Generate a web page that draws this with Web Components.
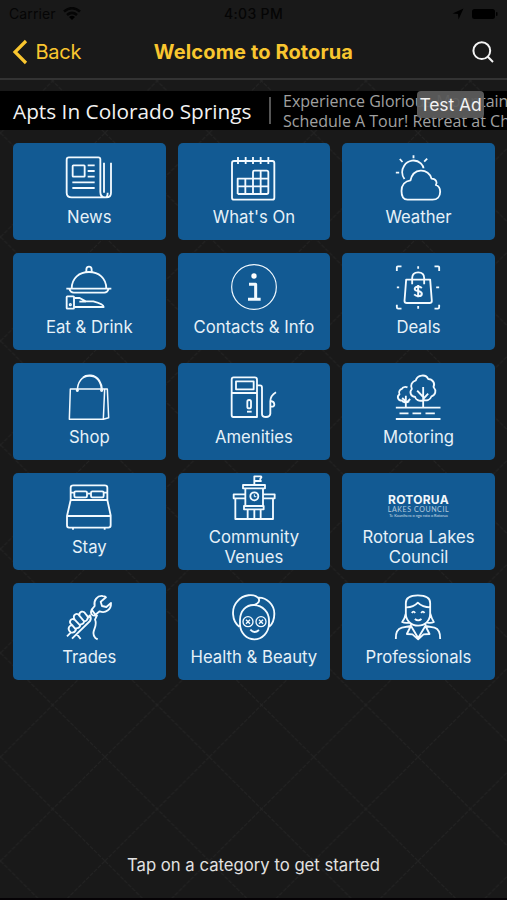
<!DOCTYPE html>
<html lang="en">
<head>
<meta charset="utf-8">
<title>Welcome to Rotorua</title>
<style>
html,body{margin:0;height:100%;background:#191919}
body{width:507px;height:900px;overflow:hidden;font-family:Inter,"Liberation Sans",sans-serif}
</style>
</head>
<body>
<rotorua-app></rotorua-app>
<script>
const icons = {
news:['196 55 144 144','<path d="M302 172V74Q302 68 296 68H208Q201 68 201 75V174Q201 188 216 188H320Q334 188 334 174V84M302 172Q302 188 317 188Q324 187 324 174M313 84V174"/><rect x="219" y="92" width="36" height="34" rx="2"/><path d="M264 92H285M264 109H285M264 126H285M218 143H285M218 160H285"/>'],
calendar:['690 55 144 144','<rect x="696" y="79" width="127" height="116" rx="6"/><path d="M714 67V88M737 67V88M759 67V88M782 67V88M805 67V88M713 178V132H759V112Q759 108 763 108H800Q805 108 805 113V173Q805 178 800 178H713M713 155H805M736 132V178M759 132V178M782 108V178M759 132H805"/>'],
weather:['424.5 55 144 144','<path d="M465 195C451 195 447 181 447 169C447 151 458 139 474 137C478 119 488 109 504 108C520 107 534 117 537 132C552 132 555 145 550 151C559 154 563 162 563 171C563 186 554 195 540 195ZM456 133C447 121 447 105 455 93C466 76 490 72 505 86C510 91 513 97 513 101M430 114H440M442 73L450 82M483 62V71M524 72L515 81"/>'],
dining:['196 55 144 144','<path d="M216 132C216 100 239 82 268 82S320 100 320 132M260 83V75Q260 66 268 66T276 75V83M200 132H335M209 133Q213 144 222 144H314Q323 144 327 133"/><rect x="201" y="155" width="22" height="37" rx="2"/><path d="M224 160H240L258 170H281Q312 178 312 187H224M239 171H259"/><circle cx="212" cy="180" r="2"/>'],
info:['690 55 144 144','<circle cx="762" cy="127" r="67" stroke-width="3.5"/><path d="M747 119H767V164M744 164H782" stroke-width="9"/><circle cx="762" cy="94" r="8" fill="#fff" stroke="none"/>'],
deals:['424.5 55 144 144','<path d="M461 105H533L538 169Q538 175 531 175H463Q456 175 456 169ZM479 119V100Q479 83 497 83T515 100V119M433 79V68Q433 65 436 65H447M546 65H557Q560 65 560 68V79M560 180V188Q560 192 556 192H546M447 192H437Q433 192 433 188V180M497 65V72M497 184V192M433 128H440M551 128H560"/><path d="M508 130C499 122 485 126 487 134C488 141 508 137 508 147C508 156 493 157 485 149M497 121V158" stroke-width="6"/>'],
bag:['196 55 144 144','<path d="M212 103H315L311 194H209ZM315 103H323L327 189L311 194M233 110C233 80 248 64 269 64C292 64 304 83 306 108M250 68C256 62 263 61 274 62C296 64 307 86 308 108" stroke-width="4.5"/><circle cx="233" cy="107" r="2"/><circle cx="306" cy="107" r="2"/>'],
fuel:['690 55 144 144','<path d="M701 68H764Q771 68 771 75V187H700Q695 187 695 181V75Q695 68 701 68ZM695 115H771M771 92H780Q786 92 786 99V178Q786 187 798 187T811 177V140Q811 123 828 113M811 139Q823 140 823 150Q823 158 811 155"/><rect x="708" y="80" width="53" height="24"/><rect x="742" y="136" width="11" height="25" rx="5"/><path d="M741 171H755"/>'],
trees:['424.5 55 144 144','<path d="M430 159H564M430 193H564M441 176H468M480 176H506M519 176H547M512 158V97M512 133L527 117M512 127L494 108M511 137C500 141 489 135 488 127C474 125 470 112 478 103C472 92 479 80 490 77C494 60 521 57 527 73C540 73 549 86 543 97C553 108 549 121 537 125C533 137 521 139 511 136M460 158V123M460 146L473 133M459 139L449 130M470 140C462 146 451 143 449 138C436 138 432 126 441 119C436 109 445 103 448 103C451 96 460 96 465 98"/>'],
bed:['196 55 144 144','<path d="M213 106V69Q213 62 221 62H315Q323 62 323 69V106M213 106H323M213 106L202 154V182Q202 189 208 189H326Q333 189 333 182V152L323 106M202 154H333M213 84H223M263 87H273M313 84H323M220 190V195M315 190V195"/><rect x="224" y="80" width="38" height="18" rx="4"/><rect x="274" y="80" width="38" height="18" rx="4"/>'],
civic:['690 26 144 144','<path d="M729 62H795V72H729ZM736 73V90M789 73V90M701 90H736V102H701ZM789 90H824V102H789ZM706 103V164H819V103M736 103V125M789 103V125M732 125H791V135H732ZM743 136V164M782 136V164M763 136V164M763 61V36H783Q786 39 781 43Q780 49 783 50H763"/><circle cx="763" cy="96" r="12"/><path d="M763 90V97H769" stroke-width="3"/>'],
wrench:['196 55 144 144','<path d="M309 64C293 62 281 77 285 94L276 105L287 120L300 110C317 117 335 105 334 85L320 97L307 94L303 81L319 68Q316 64 309 64ZM276 106C270 117 279 126 292 122L286 135C297 156 270 170 287 190L294 194M202 185L213 174M217 192L271 139Q276 131 271 122L263 129M232 179L243 193M213 173C201 162 209 151 218 152C203 141 216 128 225 135C217 119 232 113 239 123C238 110 252 106 258 118L269 130M218 152L229 165Q224 177 213 173M225 135L242 153Q237 163 227 161M239 123L254 141Q249 151 241 149M258 118L265 128Q263 139 254 140"/>'],
beauty:['690 55 144 144','<path d="M718 156C695 139 693 100 712 80C730 58 762 57 774 69C782 78 775 87 762 91C738 90 721 109 720 135V149C721 176 740 194 763 194C787 194 806 173 807 148V135C806 114 790 92 762 91M775 69C800 68 823 90 823 117Q823 142 808 156M751 165Q763 178 777 166"/><circle cx="744" cy="141" r="15" stroke-width="4"/><circle cx="783" cy="141" r="15" stroke-width="4"/><path d="M738 135L750 147M738 147L750 135M777 135L789 147M777 147L789 135" stroke-width="4"/>'],
person:['1183.5 55 144 144','<path d="M1219 98V85C1219 70 1231 62 1255 62S1292 70 1292 85V98M1219 98Q1241 99 1255 84Q1269 98 1292 98V116C1292 139 1276 153 1256 153S1219 140 1219 116ZM1219 116Q1216 132 1208 142Q1215 146 1229 144M1292 116Q1296 132 1303 142Q1296 146 1283 144M1189 193C1188 173 1193 163 1207 159L1234 154V147M1278 147V154L1305 159Q1323 165 1322 193M1234 154L1222 178L1239 179L1256 194L1272 179L1290 178L1278 154M1235 155L1256 190L1277 155M1237 115Q1242 107 1247 115M1265 115Q1270 107 1275 115M1246 133Q1256 141 1266 133"/>']
};

const css = (s) => `<style>${s}</style>`;

class StatusBar extends HTMLElement {
  constructor(){super();this.attachShadow({mode:'open'}).innerHTML=css(`
:host{display:grid;grid-template-columns:1fr auto 1fr;align-items:center;height:27px;box-sizing:border-box;padding:0 9px;color:#050505;font-size:14px}
.l{display:flex;gap:7px;align-items:center}.c{font-weight:500;letter-spacing:.35px}.r{display:flex;gap:8px;justify-content:flex-end;align-items:center}.carrier{letter-spacing:.1px}
svg{display:block}`)+`
<div class="l"><span class="carrier">Carrier</span><svg width="18" height="13" viewBox="0 0 18 13"><g fill="none" stroke="#050505" stroke-width="2.6"><path d="M1 4.6Q9-2.2 17 4.6M4 8Q9 3.8 14 8"/></g><path d="M6 10Q9 7.5 12 10L9 13Z"/></svg></div>
<div class="c">4:03 PM</div>
<div class="r"><svg width="12" height="12" viewBox="0 0 12 12"><path d="M11.500.5L6.500 11.500 6 6 .5 5.500Z"/></svg><svg width="26" height="12" viewBox="0 0 26 12"><rect x="0" y="1" width="23" height="10" rx="2.500"/><rect x="24" y="4" width="1.500" height="4" rx=".7"/></svg></div>`;}
}
class NavBar extends HTMLElement {
  constructor(){super();this.attachShadow({mode:'open'}).innerHTML=css(`
:host{display:grid;grid-template-columns:1fr auto 1fr;align-items:center;height:53px;box-sizing:border-box;border-bottom:2px solid #333;color:#f9c62f;font-size:20px}
.b{display:flex;align-items:center;gap:7.500px;padding:0 0 2px 12px}.b span{letter-spacing:-.25px}.t{font-weight:700;letter-spacing:.13px;padding-bottom:1px}.s{display:flex;justify-content:flex-end;padding:0 13px 2px 0}svg{display:block}`)+`
<div class="b"><svg width="16" height="26" viewBox="0 0 16 26" fill="none" stroke="#f9c62f" stroke-width="3.200"><path d="M14 2L3 13L14 24"/></svg><span>Back</span></div>
<div class="t"><slot></slot></div>
<div class="s"><svg width="22" height="22" viewBox="0 0 22 22" fill="none" stroke="#f4f4f4" stroke-width="2"><circle cx="9.800" cy="9.700" r="8.400"/><path d="M15.800 15.800L21 21"/></svg></div>`;}
}
class AdBanner extends HTMLElement {
  constructor(){super();this.attachShadow({mode:'open'}).innerHTML=css(`
:host{display:flex;position:relative;height:39px;margin-top:11px;background:#000;overflow:hidden;align-items:center;font-family:"Open Sans",sans-serif;white-space:nowrap}
.h{flex:none;width:238px;margin-left:13px;padding-top:2px;color:#f2f2f2;font-size:20.800px;line-height:37px}
.d{flex:none;margin-left:18px;border-left:2px solid #565656;height:27px;padding-left:12px;display:flex;flex-direction:column;justify-content:center;color:#a0a0a0;font-size:16px;line-height:19.500px}
.d span{position:relative;top:1px}
.badge{position:absolute;left:417px;top:0;width:67px;height:27px;border-radius:4px;background:rgba(92,92,92,.94);color:#f2f2f2;font:17.500px/27px Inter,sans-serif;text-align:center;letter-spacing:-.1px}`)+`
<div class="h"><slot></slot></div><div class="d"><span>Experience Glorious Mountain</span><span>Schedule A Tour! Retreat at Cheyenne</span></div><div class="badge">Test Ad</div>`;}
}
class CouncilLogo extends HTMLElement {
  constructor(){super();this.attachShadow({mode:'open'}).innerHTML=css(`
:host{display:flex;flex-direction:column;align-items:center;justify-content:center;height:48px;box-sizing:border-box;padding-top:18px;color:#f2f8fc;white-space:nowrap;font-family:Lato,sans-serif}
.a{font:700 12px/11px Inter,sans-serif;letter-spacing:.25px}.b{font-size:7px;line-height:8px;letter-spacing:.6px;opacity:.7}.c{font-size:3.900px;line-height:5px;opacity:.8}`)+`
<div class="a">ROTORUA</div><div class="b">LAKES COUNCIL</div><div class="c">Te Kaunihera o ngā roto o Rotorua</div>`;}
}
class CategoryTile extends HTMLElement {
  connectedCallback(){
    const i=icons[this.getAttribute('icon')];
    this.attachShadow({mode:'open'}).innerHTML=css(`
:host{display:flex;flex-direction:column;align-items:center;justify-content:center;gap:5.600px;box-sizing:border-box;padding-bottom:2px;border-radius:5px;background:#125a93;color:#e6f1f8;font-size:16.700px;line-height:20.500px;text-align:center}
svg{display:block}svg,council-logo{flex:none}`)+
(i?`<svg width="48" height="48" viewBox="${i[0]}" fill="none" stroke="#f2faff" stroke-width="5.500" stroke-linejoin="round">${i[1]}</svg>`:'<council-logo></council-logo>')+`<div><slot></slot></div>`;}
}
class RotoruaApp extends HTMLElement {
  constructor(){super();
  const tiles=[['news','News'],['calendar',"What's On"],['weather','Weather'],['dining','Eat &amp; Drink'],['info','Contacts &amp; Info'],['deals','Deals'],['bag','Shop'],['fuel','Amenities'],['trees','Motoring'],['bed','Stay'],['civic','Community<br>Venues'],['council','Rotorua Lakes<br>Council'],['wrench','Trades'],['beauty','Health &amp; Beauty'],['person','Professionals']];
  this.attachShadow({mode:'open'}).innerHTML=css(`
:host{display:flex;flex-direction:column;position:relative;width:507px;height:900px;box-sizing:border-box;border-bottom:2px solid #050205;background:#191919;overflow:hidden}
.bg{position:absolute;inset:80px 0 0 0;width:507px;height:818px}
status-bar,nav-bar,ad-banner,main,footer{flex:none;z-index:1}
main{display:grid;grid-template-columns:repeat(3,152.600px);grid-auto-rows:97.700px;gap:12.300px 12px;padding:12.600px 0 0 13px}
footer{margin-top:auto;padding-bottom:22px;text-align:center;color:#e2e2e2;font-size:16.700px;line-height:22px}`)+`
<svg class="bg" viewBox="0 80 507 818"><defs><pattern id="p" x="0.500" y="757" width="104.400" height="104" patternUnits="userSpaceOnUse"><path d="M0 0L104.400 104M0 104L104.400 0" stroke="#232323" fill="none" stroke-width="1" stroke-dasharray="4 1.500"/></pattern></defs><rect y="80" width="507" height="818" fill="url(#p)"/></svg>
<status-bar></status-bar><nav-bar>Welcome to Rotorua</nav-bar><ad-banner>Apts In Colorado Springs</ad-banner>
<main>${tiles.map(([k,t])=>`<category-tile icon="${k}">${t}</category-tile>`).join('')}</main>
<footer>Tap on a category to get started</footer>`;}
}
customElements.define('status-bar',StatusBar);
customElements.define('nav-bar',NavBar);
customElements.define('ad-banner',AdBanner);
customElements.define('council-logo',CouncilLogo);
customElements.define('category-tile',CategoryTile);
customElements.define('rotorua-app',RotoruaApp);
</script>
</body>
</html>
